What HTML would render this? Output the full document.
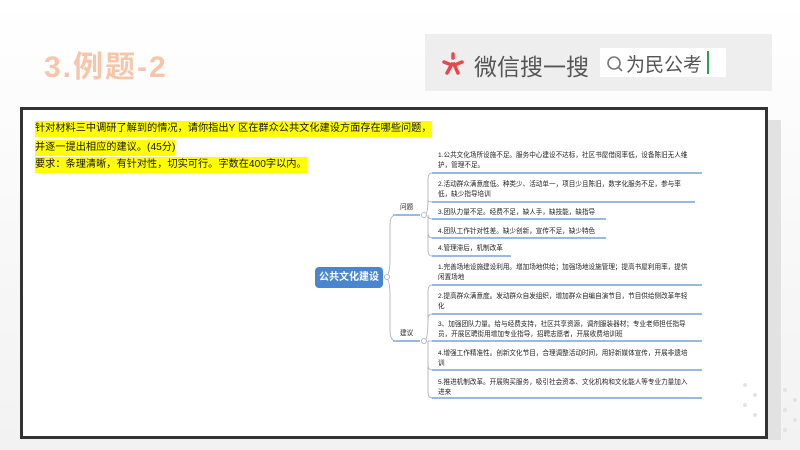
<!DOCTYPE html>
<html><head><meta charset="utf-8"><style>
body{margin:0;width:800px;height:450px;overflow:hidden;background:#fafafa;font-family:"Liberation Sans","Noto Sans CJK SC",sans-serif;position:relative}
.a{position:absolute;white-space:nowrap}
.t{position:absolute;font-size:6.6px;color:#222;line-height:10px;white-space:nowrap}
.hl{background:#ffff00;color:#111;font-size:10.2px;line-height:16px}
</style></head><body>
<div style="position:absolute;left:0;top:0;width:800px;height:450px;background:linear-gradient(#fff,#f2f2f2)"></div>
<div class="a" style="left:44px;top:42px;font-size:30px;font-weight:bold;color:#f6c6ab;letter-spacing:2px">3.例题-2</div>
<div class="a" style="left:425px;top:34px;width:347px;height:57px;background:#eeeeee"></div>
<svg class="a" style="left:438px;top:48px" width="30" height="30" viewBox="0 0 30 30"><g stroke="#e8474b" stroke-width="3.5" stroke-linecap="round" fill="none"><path d="M15 6 L15 10"/><path d="M6 14 L11 16"/><path d="M24 14 L19 16"/><path d="M14 16 L9 25"/><path d="M16 16 L20 25"/></g></svg>
<div class="a" style="left:474px;top:48px;font-size:23px;color:#555">微信搜一搜</div>
<div class="a" style="left:600px;top:48px;width:126px;height:29px;background:#fff"></div>
<svg class="a" style="left:605px;top:54px" width="20" height="20"><circle cx="9" cy="9" r="6" stroke="#777" stroke-width="1.6" fill="none"/><path d="M13 13 L17 17" stroke="#777" stroke-width="1.6"/></svg>
<div class="a" style="left:626px;top:50px;font-size:19px;color:#555">为民公考</div>
<div class="a" style="left:707px;top:51px;width:2px;height:23px;background:#2aa050"></div>
<div class="a" style="left:767px;top:120px;width:14px;height:320px;background:#e2e2e2"></div>
<div class="a" style="left:20px;top:107px;width:742px;height:326px;border:3px solid #333;background:#fff"></div>
<div class="a hl" style="left:35px;top:121px">针对材料三中调研了解到的情况，请你指出Y 区在群众公共文化建设方面存在哪些问题，</div>
<div class="a hl" style="left:35px;top:140px">并逐一提出相应的建议。(45分)</div>
<div class="a hl" style="left:35px;top:157px">要求：条理清晰，有针对性，切实可行。字数在400字以内。</div>
<svg class="a" style="left:0;top:0" width="800" height="450">
<g stroke="#5b8fd0" stroke-width="1.3" fill="none">
<path d="M432 173H702M432 202H695M432 219H606M432 238H606M432 256H511M432 285H702M432 314H702M432 341H702M432 370H702M432 398H702"/>
<path d="M393 215H420M393 341H420"/>
</g>
<g stroke="#aab" stroke-width="0.8" fill="none">
<path d="M384 277 Q390 277 390 260 V225 Q390 215 396 215"/>
<path d="M384 277 Q390 277 390 295 V330 Q390 341 396 341"/>
<path d="M424 215 Q428 215 428 200 V180 Q428 173 432 173M428 200 Q428 202 432 202M428 215 Q428 219 432 219M428 215 V232 Q428 238 432 238M428 232 V250 Q428 256 432 256"/>
<path d="M424 341 Q428 341 428 320 V292 Q428 285 432 285M428 320 Q428 314 432 314M428 341 H432M428 341 V365 Q428 370 432 370M428 360 V392 Q428 398 432 398"/>
<circle cx="424" cy="215" r="2.5" fill="#fff"/><circle cx="424" cy="341" r="2.5" fill="#fff"/><circle cx="387" cy="277" r="2.5" fill="#fff"/>
</g>
<g fill="#e3e3e3"><circle cx="745" cy="385" r="2"/><circle cx="755" cy="395" r="2"/><circle cx="745" cy="405" r="2"/><circle cx="755" cy="415" r="2"/><circle cx="785" cy="390" r="2"/><circle cx="785" cy="410" r="2"/><circle cx="795" cy="400" r="2"/><circle cx="795" cy="420" r="2"/><circle cx="785" cy="430" r="2"/></g>
</svg>
<div class="a" style="left:315px;top:267px;width:68px;height:21px;background:#4a86d0;border-radius:4px;color:#fff;font-size:10px;font-weight:bold;line-height:21px;text-align:center">公共文化建设</div>
<div class="t" style="left:400px;top:203px">问题</div>
<div class="t" style="left:400px;top:329px">建议</div>
<div class="t" style="left:438px;top:151px">1.公共文化场所设施不足。服务中心建设不达标，社区书屋借阅率低，设备陈旧无人维<br>护，管理不足。</div>
<div class="t" style="left:438px;top:180px">2.活动群众满意度低。种类少、活动单一，项目少且陈旧，数字化服务不足，参与率<br>低，缺少指导培训</div>
<div class="t" style="left:438px;top:208px">3.团队力量不足。经费不足，缺人手，缺技能，缺指导</div>
<div class="t" style="left:438px;top:227px">4.团队工作针对性差。缺少创新，宣传不足，缺少特色</div>
<div class="t" style="left:438px;top:244px">4.管理滞后，机制改革</div>
<div class="t" style="left:438px;top:263px">1.完善场地设施建设利用。增加场地供给；加强场地设施管理；提高书屋利用率，提供<br>闲置场地</div>
<div class="t" style="left:438px;top:292px">2.提高群众满意度。发动群众自发组织，增加群众自编自演节目，节目供给侧改革年轻<br>化</div>
<div class="t" style="left:438px;top:320px">3、加强团队力量。给与经费支持，社区共享资源，调剂服装器材；专业老师担任指导<br>员，开展区聘街用增加专业指导，招聘志愿者，开展收费培训班</div>
<div class="t" style="left:438px;top:349px">4.增强工作精准性。创新文化节目，合理调整活动时间，用好新媒体宣传，开展非遗培<br>训</div>
<div class="t" style="left:438px;top:378px">5.推进机制改革。开展购买服务，吸引社会资本、文化机构和文化能人等专业力量加入<br>进来</div>
</body></html>
